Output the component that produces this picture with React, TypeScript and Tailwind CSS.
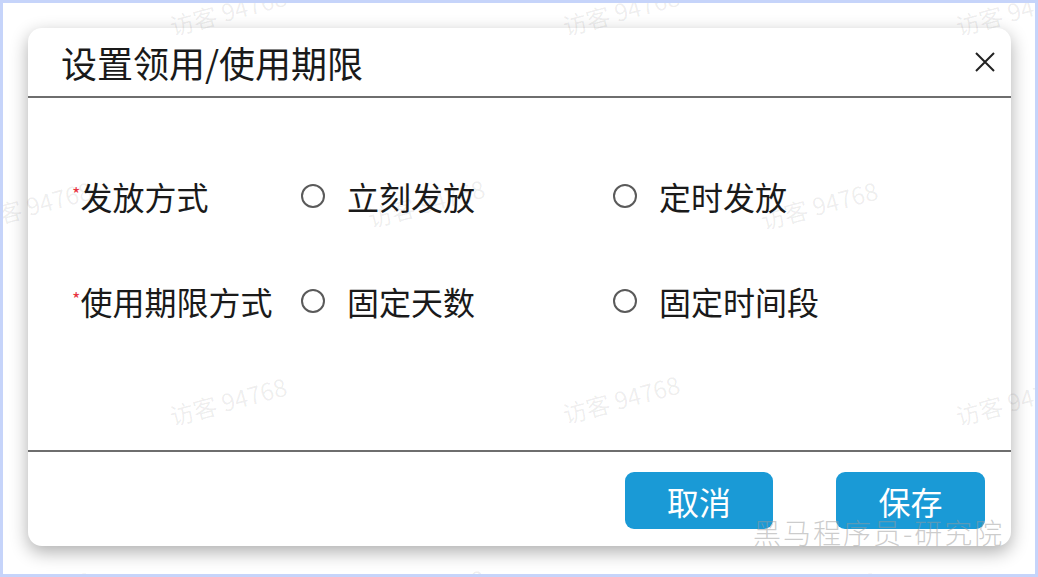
import React from 'react';

const marks = [
  { x: 225, y: 8 }, { x: 618, y: 8 }, { x: 1011, y: 8 },
  { x: 30, y: 202 }, { x: 423, y: 200 }, { x: 816, y: 202 },
  { x: 225, y: 398 }, { x: 618, y: 396 }, { x: 1011, y: 398 },
  { x: 30, y: 592 }, { x: 423, y: 590 }, { x: 816, y: 592 },
];

const Radio: React.FC<{ label: string }> = ({ label }) => (
  <label className="flex items-center gap-[22px] cursor-pointer">
    <span className="w-[24px] h-[24px] rounded-full border-2 border-[#5a5a5a] bg-white" />
    <span>{label}</span>
  </label>
);

const FieldRow: React.FC<{ label: string; options: string[] }> = ({ label, options }) => (
  <div className="flex items-center h-[48px]">
    <div className="w-[229px] flex items-start">
      <span className="text-[#e8343f] text-[18px] leading-none mt-[4px]">*</span>
      <span>{label}</span>
    </div>
    {options.map((o) => (
      <div key={o} className="w-[312px]">
        <Radio label={o} />
      </div>
    ))}
  </div>
);

export default function App() {
  return (
    <div
      className="relative w-[1038px] h-[577px] overflow-hidden bg-white border-[3px] border-[#c6d4fa] pt-[25px] pl-[25px] text-[#1a1a1a]"
      style={{ fontFamily: '"Noto Sans CJK SC", "Noto Sans", sans-serif' }}
    >
      {/* 弹窗 */}
      <div className="w-[983px] h-[518px] bg-white rounded-[14px] shadow-[0_6px_18px_rgba(0,0,0,0.32)] flex flex-col">
        <div className="h-[68px] flex items-center justify-between pl-[33px] pr-[16px]">
          <h2 className="text-[36px] leading-none">设置领用/使用期限</h2>
          <button className="w-[20px] h-[20px] text-[#222]">
            <svg viewBox="0 0 20 20" width="20" height="20" fill="none" stroke="currentColor" strokeWidth="2">
              <path d="M1 1 L19 19 M19 1 L1 19" />
            </svg>
          </button>
        </div>
        <div className="h-[2px] bg-[#6e6e6e]" />

        <div className="h-[352px] pt-[74px] pl-[44px] flex flex-col gap-[57px] text-[32px] leading-none">
          <FieldRow label="发放方式" options={['立刻发放', '定时发放']} />
          <FieldRow label="使用期限方式" options={['固定天数', '固定时间段']} />
        </div>

        <div className="h-[2px] bg-[#6e6e6e]" />
        <div className="flex-1 flex justify-end items-start pt-[20px] pr-[26px] gap-[63px]">
          <button className="w-[148px] h-[57px] rounded-[9px] bg-[#1a9ad6] text-white text-[32px] leading-none">
            取消
          </button>
          <button className="w-[149px] h-[57px] rounded-[9px] bg-[#1a9ad6] text-white text-[32px] leading-none">
            保存
          </button>
        </div>
      </div>

      {/* 水印 */}
      <div className="absolute inset-0 pointer-events-none">
        {marks.map((m, i) => (
          <span
            key={i}
            className="absolute whitespace-nowrap text-[24px] leading-none text-black/[0.07] -translate-x-1/2 -translate-y-1/2 -rotate-[15deg]"
            style={{ left: m.x, top: m.y }}
          >
            访客 94768
          </span>
        ))}
        <span className="absolute left-[750px] top-[515px] text-[28px] leading-none text-[#9a9a9a]/50 tracking-[2px] font-light">
          黑马程序员-研究院
        </span>
      </div>
    </div>
  );
}
